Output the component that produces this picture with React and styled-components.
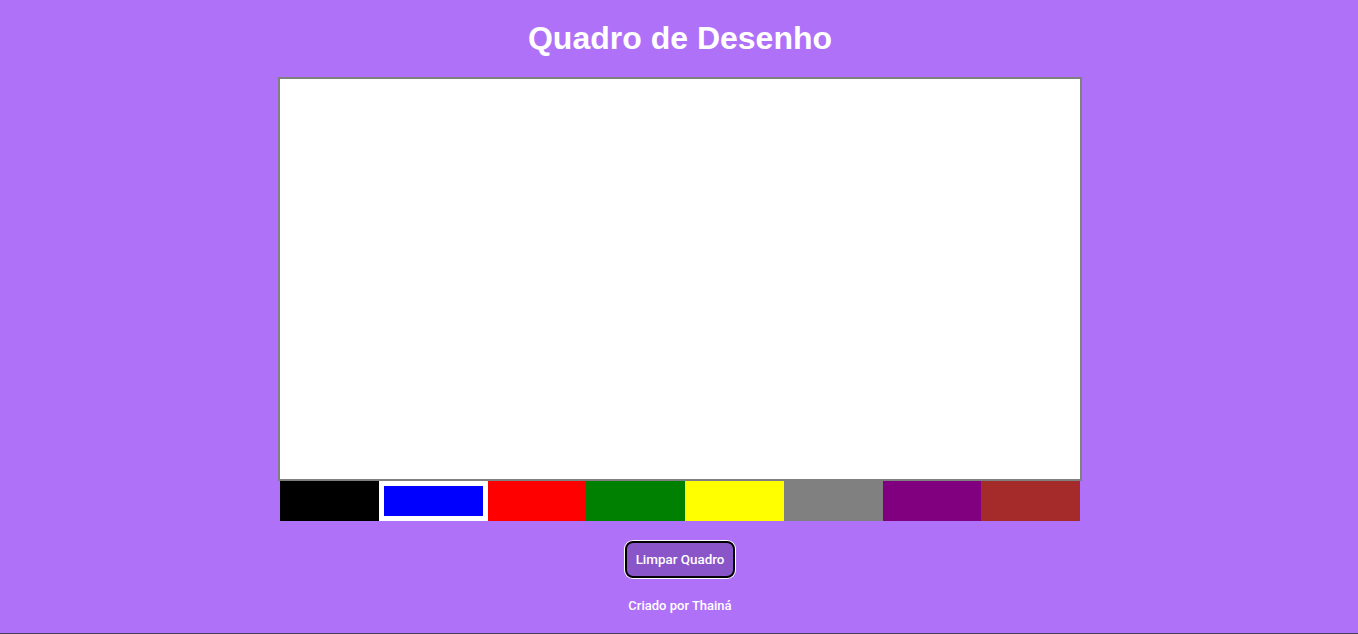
import React, { useState } from "react";
import styled, { createGlobalStyle } from "styled-components";

const Global = createGlobalStyle`
  html, body { margin: 0; padding: 0; }
  body { background: #b071f9; font-family: "Liberation Sans", Arial, sans-serif; }
`;

const Page = styled.div`
  min-height: 100vh;
  box-sizing: border-box;
  padding-left: 2px;
  border-bottom: 1px solid #45405a;
  display: flex;
  flex-direction: column;
  align-items: center;
`;

const Title = styled.h1`
  margin: 20px 0 20px;
  font-family: "Liberation Sans", Arial, sans-serif;
  font-size: 32px;
  line-height: 37px;
  font-weight: 700;
  color: #ffffff;
`;

const Board = styled.div`
  width: 800px;
  height: 400px;
  background: #ffffff;
  border: 2px solid #808080;
`;

const Palette = styled.div`
  display: flex;
  width: 800px;
  height: 40px;
`;

const Swatch = styled.button`
  flex: 0 1 100px;
  height: 40px;
  padding: 0;
  margin: 0;
  cursor: pointer;
  box-sizing: content-box;
  background: ${(p) => p.$color};
  border: ${(p) => (p.$active ? "5px solid #ffffff" : "none")};
  ${(p) => (p.$active ? "height: 30px;" : "")}
`;

const ClearButton = styled.button`
  margin-top: 20px;
  width: 110px;
  height: 37px;
  padding: 0;
  border-radius: 8px;
  border: 2px solid #000000;
  box-shadow: 0 0 0 1px #ffffff;
  background: #8955c8;
  color: #ffffff;
  font-family: Roboto, "Liberation Sans", sans-serif;
  font-size: 13.4px;
  font-weight: 500;
  cursor: pointer;
`;

const Footer = styled.p`
  margin: 20px 0 0;
  font-family: Roboto, "Liberation Sans", sans-serif;
  font-size: 13px;
  line-height: 16px;
  font-weight: 500;
  color: #ffffff;
`;

const colors = ["#000000", "#0000ff", "#ff0000", "#008000", "#ffff00", "#808080", "#800080", "#a52a2a"];

export default function App() {
  const [active, setActive] = useState(1);
  return (
    <Page>
      <Global />
      <Title>Quadro de Desenho</Title>
      <Board />
      <Palette>
        {colors.map((c, i) => (
          <Swatch key={c} $color={c} $active={i === active} onClick={() => setActive(i)} aria-label={c} />
        ))}
      </Palette>
      <ClearButton>Limpar Quadro</ClearButton>
      <Footer>Criado por Thainá</Footer>
    </Page>
  );
}
